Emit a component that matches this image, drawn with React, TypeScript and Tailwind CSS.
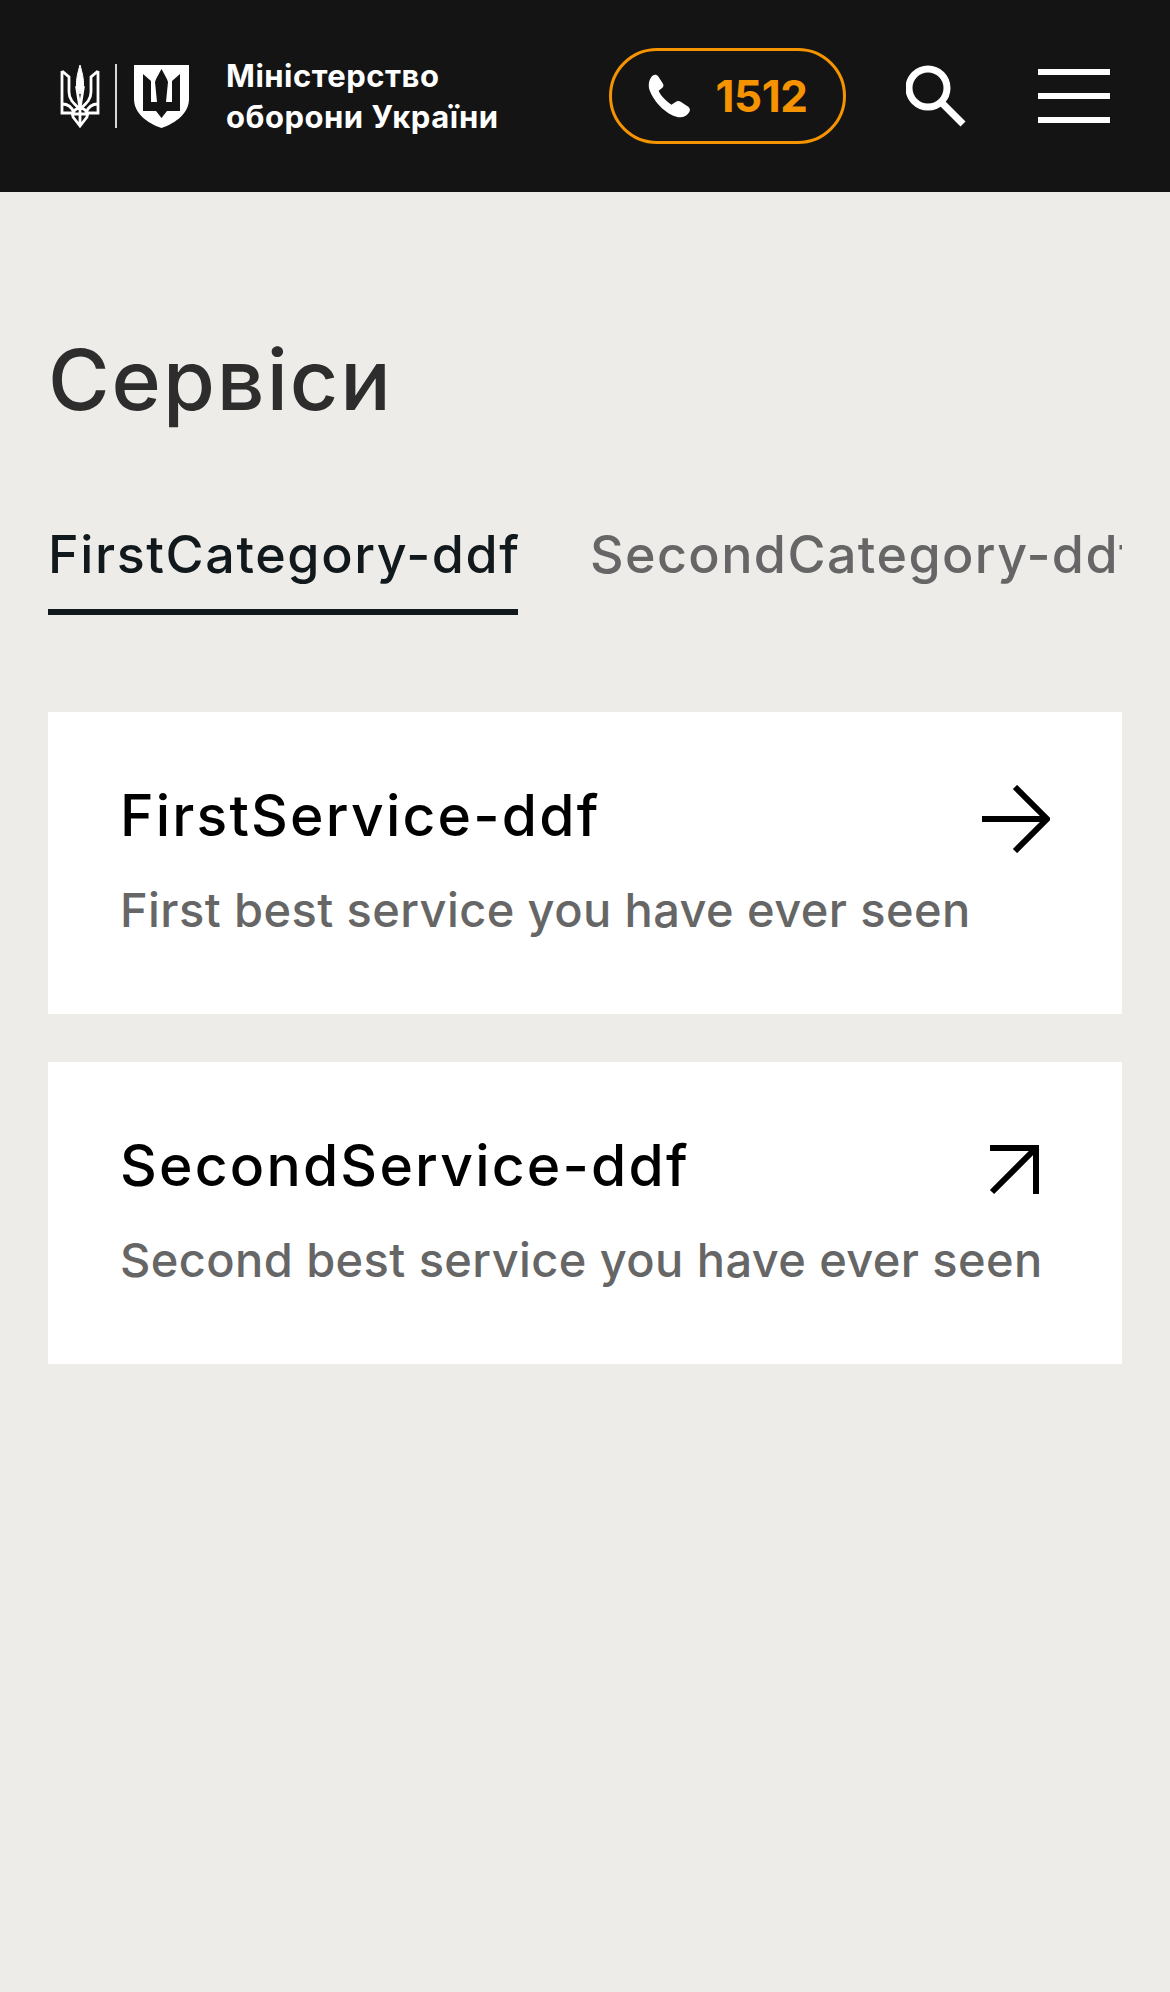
const font = "font-['Inter','Liberation_Sans',sans-serif]";

function Trident() {
  return (
    <svg width="40" height="64" viewBox="0 0 40 64" fill="none" stroke="#fff" strokeWidth="2.8" className="shrink-0">
      <path fill="#fff" strokeWidth="1" d="M20 1 C22 8 24 15 23.5 22 L20 30 L16.5 22 C16 15 18 8 20 1Z" />
      <path d="M16.5 22 L20 44 L23.5 22" />
      <path d="M2 7 L9 13 V28 C9 35 13 39 19 44 M2 7 V49 H14" />
      <path d="M38 7 L31 13 V28 C31 35 27 39 21 44 M38 7 V49 H26" />
      <path d="M20 62 L13 53 C12 47 16 44 20 44 C24 44 28 47 27 53 Z M20 44 V62 M11 50 H29" />
      <path d="M2 40 C8 40 12 43 14 49 M38 40 C32 40 28 43 26 49" />
    </svg>
  );
}

function Shield() {
  return (
    <svg width="55" height="63" viewBox="0 0 55 63" className="shrink-0">
      <path
        fillRule="evenodd"
        fill="#fff"
        d="M0 0 H55 V34 C55 48 42 58 27.5 63 C13 58 0 48 0 34 Z M9 9 L17 16 V37 H23 L21 17 C22 13 25 9 27.5 4 C30 9 33 13 34 17 L32 37 H38 V16 L46 9 V46 H33 L27.5 53 L22 46 H9 Z"
      />
    </svg>
  );
}

function Phone() {
  return (
    <svg width="42" height="44" viewBox="0 0 122 125" fill="#fff" className="shrink-0">
      <path d="M8 10 C14 0 24 -2 30 6 L44 28 C46 33 44 37 40 40 L31 47 C36 60 50 74 68 88 L80 80 C85 76 90 76 95 79 L117 94 C123 99 123 106 118 112 C110 122 100 126 88 124 C50 118 10 70 3 40 C1 28 3 18 8 10 Z" />
    </svg>
  );
}

function Search() {
  return (
    <svg width="60" height="62" viewBox="0 0 60 62" fill="none" stroke="#fff" strokeWidth="7" className="shrink-0">
      <circle cx="22" cy="23" r="19" />
      <path d="M35 37 L57 59" />
    </svg>
  );
}

function ArrowRight() {
  return (
    <svg width="68" height="68" viewBox="0 0 68 68" fill="none" stroke="#000" strokeWidth="6" className="shrink-0">
      <path d="M0 34 H64 M33 2 L65 34 L33 66" />
    </svg>
  );
}

function ArrowUpRight() {
  return (
    <svg width="50" height="50" viewBox="0 0 50 50" fill="none" stroke="#000" strokeWidth="6" className="shrink-0">
      <path d="M1 3 H47 V49 M47 3 L3 47" />
    </svg>
  );
}

function Card({ title, text, icon, shift }: { title: string; text: string; icon: React.ReactNode; shift: string }) {
  return (
    <div className="relative h-[302px] bg-white pl-[72px] pt-[71px]">
      <div className="text-[57px] font-[450] leading-[66px] tracking-[2.2px] text-black whitespace-nowrap">{title}</div>
      <div className="mt-[33px] text-[47px] font-[450] leading-[56px] tracking-[0.4px] text-[#666] whitespace-nowrap">{text}</div>
      <div className={`absolute flex h-[68px] w-[68px] items-center justify-center ${shift}`}>{icon}</div>
    </div>
  );
}

export default function App() {
  return (
    <div className={`${font} min-h-[1992px] bg-[#edece8]`}>
      <header className="flex h-[192px] items-center bg-[#141414] pl-[60px] pr-[60px]">
        <Trident />
        <div className="ml-[15px] h-[64px] w-[2px] bg-[#d5d7dc]" />
        <div className="ml-[17px]"><Shield /></div>
        <div className="ml-[37px] text-[31px] font-bold leading-[41px] tracking-[0.5px] text-white whitespace-nowrap">
          <div>Міністерство</div>
          <div>оборони України</div>
        </div>
        <div className="ml-auto flex h-[96px] w-[237px] items-center justify-center gap-[26px] rounded-full border-[3px] border-[#f59300]">
          <Phone />
          <span className="text-[44px] font-bold tracking-[-0.5px] text-[#f59300]">1512</span>
        </div>
        <div className="ml-[60px]"><Search /></div>
        <div className="ml-[72px] flex w-[72px] flex-col gap-[18px]">
          <div className="h-[6px] bg-white" />
          <div className="h-[6px] bg-white" />
          <div className="h-[6px] bg-white" />
        </div>
      </header>
      <main className="px-[48px] pt-[138px]">
        <h1 className="text-[84px] font-[450] leading-[100px] tracking-[2px] text-[#2d2d2d]">Сервіси</h1>
        <div className="mt-[74px] flex gap-[72px] overflow-hidden text-[52px] font-[450] leading-[64px] tracking-[1.6px] whitespace-nowrap">
          <div className="h-[111px] w-[470px] shrink-0 border-b-[6px] border-[#11191d] pt-[19px] text-[#11191d]">FirstCategory-ddf</div>
          <div className="shrink-0 pt-[19px] tracking-[1.4px] text-[#666]">SecondCategory-ddf</div>
        </div>
        <div className="mt-[97px] flex flex-col gap-[48px]">
          <Card title="FirstService-ddf" text="First best service you have ever seen" icon={<ArrowRight />} shift="right-[72px] top-[73px]" />
          <Card title="SecondService-ddf" text="Second best service you have ever seen" icon={<ArrowUpRight />} shift="right-[74px] top-[74px]" />
        </div>
      </main>
    </div>
  );
}
